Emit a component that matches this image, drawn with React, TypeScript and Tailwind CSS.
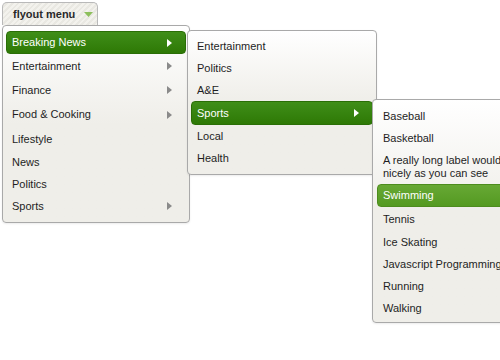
import React from "react";

type Item = { label: React.ReactNode; h: string; sub?: boolean; active?: "dark" | "light" };

const font = { fontFamily: '"Liberation Sans", Arial, sans-serif' };

function Arrow({ white }: { white?: boolean }) {
  return (
    <svg width="5" height="8" viewBox="0 0 5 8" className="shrink-0" aria-hidden>
      <path d="M0 0L5 4L0 8Z" fill={white ? "#ffffff" : "#8a8a8a"} />
    </svg>
  );
}

function Row({ item }: { item: Item }) {
  const base = "flex items-center justify-between px-[5px] rounded-[4px] " + item.h;
  if (item.active === "dark") {
    return (
      <div className={base + " text-white bg-gradient-to-b from-[#3f8e18] to-[#2e7905] border border-[#2a6e06]"}>
        <span>{item.label}</span>
        {item.sub && <span className="pr-[8px]"><Arrow white /></span>}
      </div>
    );
  }
  if (item.active === "light") {
    return (
      <div className={base + " text-white bg-gradient-to-b from-[#67a834] to-[#549a21] border border-[#4d8c1e]"}>
        <span>{item.label}</span>
      </div>
    );
  }
  return (
    <div className={base + " text-[#1e1e1e] border border-transparent"}>
      <span className="leading-[13px]">{item.label}</span>
      {item.sub && <span className="pr-[8px]"><Arrow /></span>}
    </div>
  );
}

function Menu({ items, className }: { items: Item[]; className: string }) {
  return (
    <div
      className={
        "border border-[#a9a9a9] rounded-[4px] bg-gradient-to-b from-white via-[#efeee9] to-[#efeee9] shadow-[0_1px_2px_rgba(0,0,0,0.08)] " +
        className
      }
    >
      {items.map((it, i) => (
        <Row key={i} item={it} />
      ))}
    </div>
  );
}

const main: Item[] = [
  { label: "Breaking News", h: "h-[23px]", sub: true, active: "dark" },
  { label: "Entertainment", h: "h-[24px]", sub: true },
  { label: "Finance", h: "h-[24px]", sub: true },
  { label: "Food & Cooking", h: "h-[25px]", sub: true },
  { label: "Lifestyle", h: "h-[24px]" },
  { label: "News", h: "h-[22px]" },
  { label: "Politics", h: "h-[22px]" },
  { label: "Sports", h: "h-[22px]", sub: true },
];

const news: Item[] = [
  { label: "Entertainment", h: "h-[22px]" },
  { label: "Politics", h: "h-[22px]" },
  { label: "A&E", h: "h-[22px]" },
  { label: "Sports", h: "h-[24px]", sub: true, active: "dark" },
  { label: "Local", h: "h-[22px]" },
  { label: "Health", h: "h-[22px]" },
];

const sports: Item[] = [
  { label: "Baseball", h: "h-[22px]" },
  { label: "Basketball", h: "h-[22px]" },
  { label: "A really long label would wrap nicely as you can see", h: "h-[35px]" },
  { label: "Swimming", h: "h-[23px]", active: "light" },
  { label: "Tennis", h: "h-[24px]" },
  { label: "Ice Skating", h: "h-[22px]" },
  { label: "Javascript Programming", h: "h-[22px]" },
  { label: "Running", h: "h-[22px]" },
  { label: "Walking", h: "h-[22px]" },
];

export default function App() {
  return (
    <div className="relative w-[500px] h-[360px] overflow-hidden bg-white text-[11px]" style={font}>
      <div className="pl-[2px] pt-[2px]">
        <div className="flex items-center gap-[9px] w-[96px] h-[23px] pl-[10px] border border-b-0 border-[#b9b9b9] rounded-t-[5px] bg-[repeating-linear-gradient(135deg,#f3f2ed_0px,#f3f2ed_2px,#e9e8e2_2px,#e9e8e2_4px)] font-bold text-[#2a2a2a]">
          <span>flyout menu</span>
          <svg width="9" height="5" viewBox="0 0 9 5" aria-hidden>
            <path d="M0 0H9L4.5 5Z" fill="#8dbf5c" />
          </svg>
        </div>
        <Menu items={main} className="w-[188px] pt-[5px] pb-[5px] px-[3px]" />
      </div>
      <Menu items={news} className="absolute left-[187px] top-[30px] w-[190px] pt-[4px] pb-[5px] px-[3px]" />
      <Menu items={sports} className="absolute left-[372px] top-[99px] w-[182px] pt-[5px] pb-[3px] px-[4px]" />
    </div>
  );
}
